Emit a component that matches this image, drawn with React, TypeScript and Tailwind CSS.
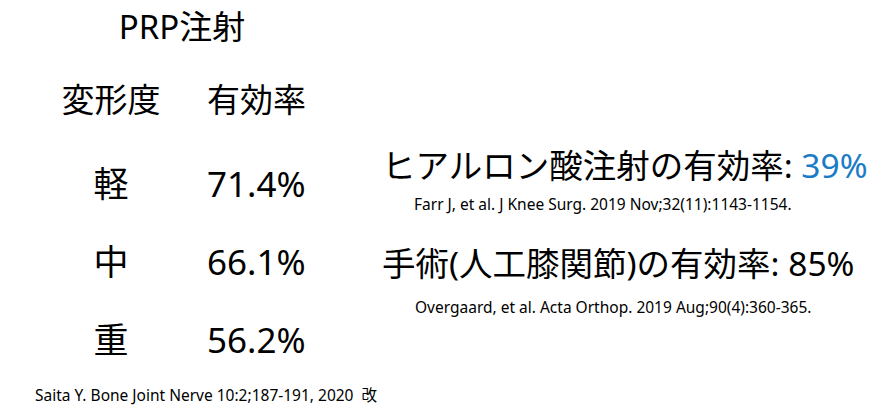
const font = { fontFamily: '"Noto Sans", "Noto Sans CJK JP", sans-serif' }

const rows = [
  { grade: '軽', rate: '71.4%' },
  { grade: '中', rate: '66.1%' },
  { grade: '重', rate: '56.2%' },
]

export default function App() {
  return (
    <div className="w-[896px] h-[420px] bg-white text-black flex overflow-hidden" style={font}>
      {/* left: PRP table */}
      <div className="w-[382px] flex flex-col">
        <div className="w-[364px] mt-[10px] text-center text-[33px] leading-[34px]">PRP注射</div>

        <div className="mt-[36px] pl-[46px] grid grid-cols-[130px_auto] gap-x-[31px] text-[33px] leading-[40px]">
          <div className="text-center">変形度</div>
          <div>有効率</div>
        </div>

        <div className="mt-[25px] pl-[46px] flex flex-col">
          {rows.map(r => (
            <div key={r.grade} className="h-[78px] grid grid-cols-[130px_auto] gap-x-[31px] items-center text-[35px]">
              <div className="text-center">{r.grade}</div>
              <div>{r.rate}</div>
            </div>
          ))}
        </div>

        <div className="mt-[6px] pl-[35px] text-[15.5px] leading-[20px] whitespace-nowrap">
          Saita Y. Bone Joint Nerve 10:2;187-191, 2020&nbsp;&nbsp;改
        </div>
      </div>

      {/* right: comparison */}
      <div className="flex flex-col pt-[145px] whitespace-nowrap">
        <div className="text-[33.5px] leading-[40px]">
          ヒアルロン酸注射の有効率: <span className="text-[#1a7cc6]">39%</span>
        </div>
        <div className="mt-[10px] pl-[32px] text-[15.5px] leading-[18px]">
          Farr J, et al. J Knee Surg. 2019 Nov;32(11):1143-1154.
        </div>
        <div className="mt-[30px] text-[33.5px] leading-[40px]">
          手術(人工膝関節)の有効率: 85%
        </div>
        <div className="mt-[15px] pl-[33px] text-[15.5px] leading-[18px]">
          Overgaard, et al. Acta Orthop. 2019 Aug;90(4):360-365.
        </div>
      </div>
    </div>
  )
}
